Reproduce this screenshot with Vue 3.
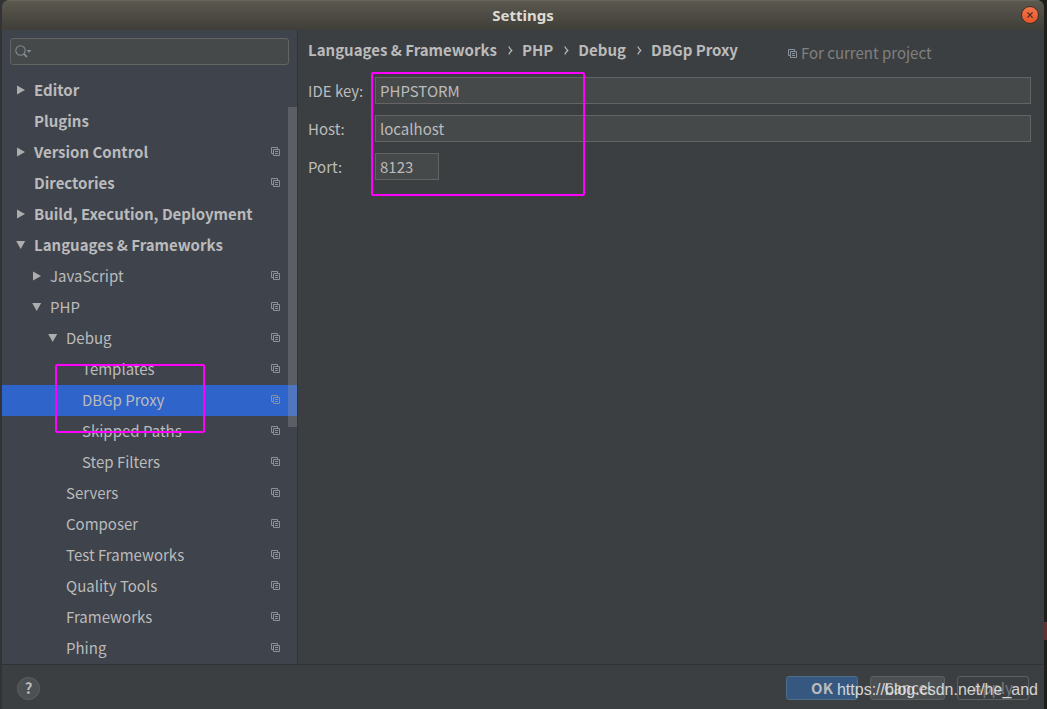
<script setup>
import { ref } from 'vue'

const rows = [
  { label: 'Editor', depth: 0, arrow: 'right' },
  { label: 'Plugins', depth: 0 },
  { label: 'Version Control', depth: 0, arrow: 'right', project: true },
  { label: 'Directories', depth: 0, project: true },
  { label: 'Build, Execution, Deployment', depth: 0, arrow: 'right' },
  { label: 'Languages & Frameworks', depth: 0, arrow: 'down' },
  { label: 'JavaScript', depth: 1, arrow: 'right', project: true },
  { label: 'PHP', depth: 1, arrow: 'down', project: true },
  { label: 'Debug', depth: 2, arrow: 'down', project: true },
  { label: 'Templates', depth: 3, project: true },
  { label: 'DBGp Proxy', depth: 3, project: true },
  { label: 'Skipped Paths', depth: 3, project: true },
  { label: 'Step Filters', depth: 3, project: true },
  { label: 'Servers', depth: 2, project: true },
  { label: 'Composer', depth: 2, project: true },
  { label: 'Test Frameworks', depth: 2, project: true },
  { label: 'Quality Tools', depth: 2, project: true },
  { label: 'Frameworks', depth: 2, project: true },
  { label: 'Phing', depth: 2, project: true }
]
const crumbs = ['Languages & Frameworks', 'PHP', 'Debug', 'DBGp Proxy']
const selected = ref('DBGp Proxy')
const query = ref('')
const ideKey = ref('PHPSTORM')
const host = ref('localhost')
const port = ref('8123')
</script>

<template>
  <div class="desktop">
    <div class="window">
      <header class="titlebar">
        <h1>Settings</h1>
        <button class="close" type="button" aria-label="Close">
          <svg width="18" height="18" viewBox="0 0 18 18">
            <path d="M6.4 6.4l5.2 5.2M11.6 6.4l-5.2 5.2" stroke="#4a2a1c" stroke-width="1.3" fill="none" />
          </svg>
        </button>
      </header>

      <div class="body">
        <nav class="sidebar" aria-label="Settings categories">
          <div class="search">
            <svg width="18" height="14" viewBox="0 0 18 14" aria-hidden="true">
              <circle cx="5.5" cy="5.5" r="4.7" fill="none" stroke="#7f8b91" stroke-width="1.1" />
              <path d="M8.8 8.8l3.2 3.2" stroke="#7f8b91" stroke-width="1.8" />
              <path d="M11.5 5h5l-2.5 3z" fill="#7f8b91" />
            </svg>
            <input v-model="query" type="text" aria-label="Search settings">
          </div>
          <ul class="tree">
            <li v-for="row in rows" :key="row.label">
              <button
                type="button"
                class="row"
                :class="['depth-' + row.depth, { selected: row.label === selected }]"
                @click="selected = row.label"
              >
                <svg class="arrow" width="10" height="10" viewBox="0 0 10 10" aria-hidden="true">
                  <path v-if="row.arrow === 'right'" d="M1 0.5L9 5L1 9.5z" fill="#adadad" />
                  <path v-if="row.arrow === 'down'" d="M0.2 1H9.2L4.7 9z" fill="#adadad" />
                </svg>
                <span class="label">{{ row.label }}</span>
                <svg v-if="row.project" class="copy" width="9" height="9" viewBox="0 0 9 9" aria-hidden="true">
                  <path d="M2 6.5H0.5V0.5H6.5V2M2.5 2.5H8.5V8.5H2.5zM4 4.5H7M4 6.5H7" fill="none" stroke="currentColor" />
                </svg>
              </button>
            </li>
          </ul>
          <div class="thumb"></div>
          <div class="mark mark-tree"></div>
        </nav>

        <main class="content">
          <div class="heading">
            <ol class="crumbs">
              <li v-for="(crumb, i) in crumbs" :key="crumb">
                <svg v-if="i" width="5" height="9" viewBox="0 0 5 9" aria-hidden="true">
                  <path d="M0.8 0.5Q1.8 3 3.8 4.5Q1.8 6 0.8 8.5" fill="none" stroke="#bbbbbb" stroke-width="1.1" />
                </svg>
                <span>{{ crumb }}</span>
              </li>
            </ol>
            <p class="scope">
              <svg class="copy" width="9" height="9" viewBox="0 0 9 9" aria-hidden="true">
                <path d="M2 6.5H0.5V0.5H6.5V2M2.5 2.5H8.5V8.5H2.5zM4 4.5H7M4 6.5H7" fill="none" stroke="currentColor" />
              </svg>
              For current project
            </p>
          </div>
          <form class="form" @submit.prevent>
            <label for="ide-key">IDE key:</label>
            <input id="ide-key" v-model="ideKey" type="text">
            <label for="host">Host:</label>
            <input id="host" v-model="host" type="text">
            <label for="port">Port:</label>
            <input id="port" v-model="port" class="short" type="text">
            <div class="mark mark-form"></div>
          </form>
        </main>
      </div>

      <footer class="footer">
        <button class="help" type="button" aria-label="Help">?</button>
        <div class="actions">
          <button class="action primary" type="button">OK</button>
          <button class="action cancel" type="button">Cancel</button>
          <button class="action" type="button" disabled>Apply</button>
        </div>
        <span class="watermark">https://blog.csdn.net/he_and</span>
      </footer>
    </div>
    <div class="edge"></div>
  </div>
</template>

<style>
body {
  margin: 0;
  background: #313335;
}
</style>

<style scoped>
* {
  box-sizing: border-box;
}
.desktop {
  position: relative;
  display: flex;
  min-height: 100vh;
  padding: 0 3px 0 2px;
  background: linear-gradient(90deg, #313335 50%, #1f201c 50%);
  font: 15px/24px "Noto Sans CJK SC", "Noto Sans", sans-serif;
  color: #bbbbbb;
}
.edge {
  position: absolute;
  right: 0;
  bottom: 69px;
  width: 3px;
  height: 18px;
  background: #643232;
}
button,
input {
  font: inherit;
  color: inherit;
}
.window {
  flex: 1;
  display: flex;
  flex-direction: column;
  min-width: 0;
  background: #3c3f41;
  border-radius: 7px 7px 0 0;
  overflow: hidden;
}
.titlebar {
  position: relative;
  display: flex;
  align-items: center;
  justify-content: center;
  height: 30px;
  padding-bottom: 2px;
  background: linear-gradient(#5b584f, #3f3e38);
  border-top: 1px solid #68655c;
}
h1 {
  margin: 0;
  font: bold 15px/20px "Noto Sans", sans-serif;
  color: #dfdbd2;
}
.close {
  position: absolute;
  right: 5px;
  top: 5px;
  display: flex;
  width: 18px;
  height: 18px;
  padding: 0;
  border: 1px solid #3c2f28;
  border-radius: 50%;
  background: linear-gradient(#f4744b, #e7562a);
}
.close svg {
  flex: none;
  margin: -1px;
}
.body {
  flex: 1;
  display: flex;
}
.sidebar {
  position: relative;
  width: 296px;
  padding-top: 8px;
  background: #3f434c;
  border-right: 1px solid #323436;
}
.search {
  display: flex;
  align-items: center;
  height: 27px;
  margin: 0 8px;
  padding-left: 4px;
  background: #45494a;
  border: 1px solid #646464;
  border-radius: 3px;
}
.search input {
  flex: 1;
  min-width: 0;
  padding: 0 4px;
  background: none;
  border: 0;
  outline: 0;
}
.tree {
  margin: 10px 0 0;
  padding: 0;
  list-style: none;
}
.row {
  display: flex;
  align-items: center;
  width: 100%;
  height: 31px;
  padding: 0 17px 2px 14px;
  background: none;
  border: 0;
  text-align: left;
}
.label {
  flex: 1;
  margin-left: 8px;
  white-space: nowrap;
}
.depth-0 {
  font-weight: bold;
}
.depth-1 {
  padding-left: 30px;
}
.depth-2 {
  padding-left: 46px;
}
.depth-3 {
  padding-left: 62px;
}
.selected {
  background: #2f65ca;
}
.copy {
  flex: none;
  color: #89929b;
}
.thumb {
  position: absolute;
  top: 77px;
  right: 0;
  width: 9px;
  height: 320px;
  background: rgba(166, 166, 166, 0.28);
}
.mark {
  position: absolute;
  border: 2px solid #ff00ff;
  border-radius: 2px;
  pointer-events: none;
}
.mark-tree {
  top: 334px;
  left: 53px;
  width: 150px;
  height: 69px;
}
.mark-form {
  top: -5px;
  left: 63px;
  width: 214px;
  height: 124px;
}
.content {
  flex: 1;
  min-width: 0;
  padding: 8px 13px 0 10px;
}
.heading {
  display: flex;
  gap: 50px;
  height: 39px;
}
.crumbs {
  display: flex;
  margin: 0;
  padding: 0;
  list-style: none;
  font-weight: bold;
  white-space: nowrap;
}
.crumbs svg {
  margin: 0 9px 1px 11px;
}
.scope {
  display: flex;
  align-items: center;
  gap: 4px;
  height: 24px;
  margin: 3px 0 0;
  color: #808080;
  white-space: nowrap;
}
.form {
  position: relative;
  display: grid;
  grid-template-columns: 56px 1fr;
  gap: 11px;
  align-items: center;
}
.form label {
  white-space: nowrap;
}
.form input {
  width: 100%;
  height: 27px;
  padding: 0 4px;
  background: #45494a;
  border: 1px solid #646464;
  outline: 0;
}
.form .short {
  width: 64px;
}
.footer {
  position: relative;
  display: flex;
  align-items: center;
  justify-content: space-between;
  height: 45px;
  padding: 2px 15px 0;
  border-top: 1px solid #323232;
}
.help {
  width: 23px;
  height: 23px;
  padding: 0;
  background: #4c5052;
  border: 1px solid #5e6060;
  border-radius: 50%;
  line-height: 20px;
  font-weight: bold;
}
.actions {
  display: flex;
  gap: 12px;
}
.action {
  width: 72px;
  height: 24px;
  padding: 0;
  background: #3c3f41;
  border: 1px solid #5e6060;
  border-radius: 3px;
  line-height: 22px;
}
.action:disabled {
  color: #777777;
}
.cancel {
  width: 75px;
  background: #4c5052;
}
.primary {
  background: #365880;
  border-color: #4c708c;
  font-weight: bold;
}
.watermark {
  position: absolute;
  right: 6px;
  top: 14px;
  font: 16px/22px "Liberation Sans", Arial, sans-serif;
  color: rgba(240, 240, 240, 0.85);
  white-space: nowrap;
}
</style>
